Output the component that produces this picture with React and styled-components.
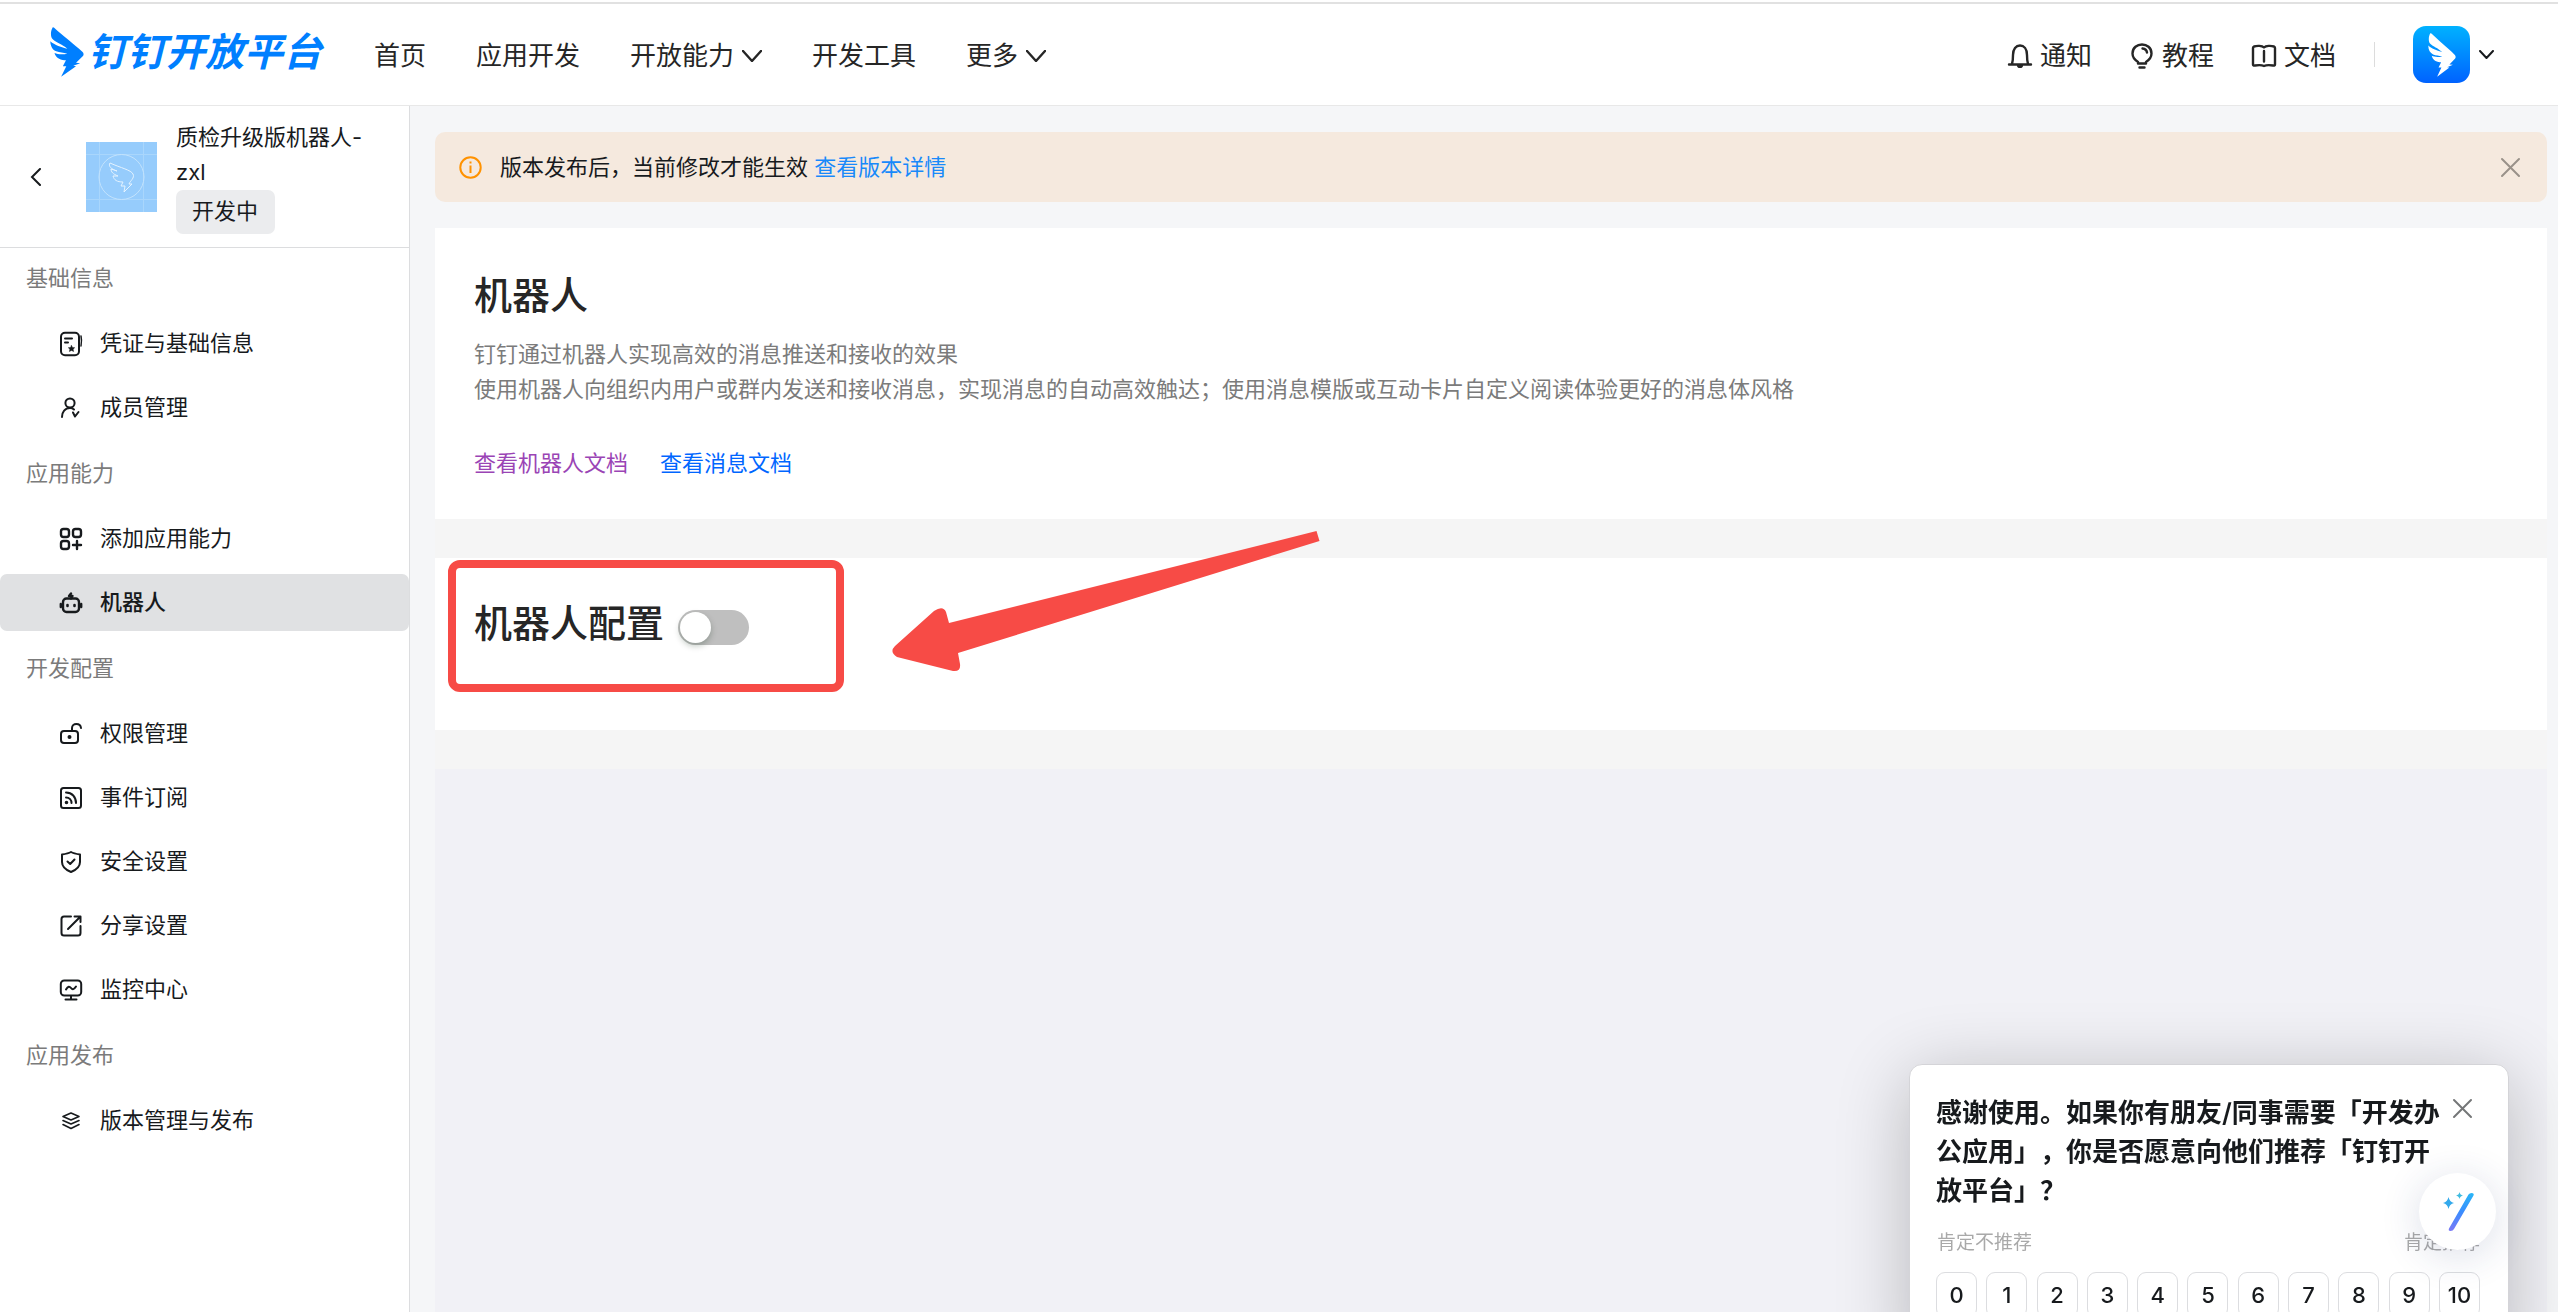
import React, { useState } from 'react'
import styled, { createGlobalStyle } from 'styled-components'

const GlobalStyle = createGlobalStyle`
* {
    box-sizing: border-box;
}
body {
    margin: 0;
    background: #f5f6f8;
    color: #171a1d;
    font-family: Inter, 'Noto Sans CJK SC', sans-serif;
    font-size: 22px;
    line-height: 35px;
    text-spacing-trim: space-all;
}
a {
    text-decoration: none;
}
button {
    font: inherit;
    color: inherit;
    background: none;
    border: 0;
    padding: 0;
    cursor: pointer;
}
svg {
    display: block;
    flex: none;
}
h1, h2, h3, p {
    margin: 0;
}
`

const Page = styled.div`
min-height: 100vh;
display: flex;
flex-direction: column;
`

const TopLine = styled.div`
height: 4px;
background: #fff;
border-bottom: 2px solid #e1e1e1;
`

const Header = styled.header`
display: flex;
align-items: center;
height: 102px;
padding: 0 64px 0 50px;
background: #fff;
border-bottom: 1px solid #e8e8e8;
`

const Logo = styled.a`
display: flex;
align-items: center;
gap: 4px;
margin-bottom: 6px;
color: #007fff;
font-size: 39px;
line-height: 50px;
font-weight: 700;
font-style: italic;
`

const Nav = styled.nav`
display: flex;
flex: 1;
gap: 50px;
margin-left: 52px;
`

const NavLink = styled.a`
display: flex;
align-items: center;
gap: 8px;
padding-top: 2px;
color: #262626;
font-size: 26px;
line-height: 38px;
white-space: nowrap;
`

const Tools = styled.div`
display: flex;
align-items: center;
gap: 38px;
`

const Divider = styled.span`
width: 1px;
height: 25px;
background: #dcdcdc;
`

const AvatarButton = styled.button`
display: flex;
align-items: center;
gap: 9px;
`

const Avatar = styled.span`
display: flex;
align-items: center;
justify-content: center;
width: 57px;
height: 57px;
border-radius: 13px;
background: linear-gradient(#00b2ff, #0062ff);
color: #fff;
`

const Body = styled.div`
display: flex;
flex: 1;
`

const Sidebar = styled.aside`
flex: none;
width: 410px;
background: #fff;
border-right: 1px solid #dcdddf;
`

const AppInfo = styled.div`
display: flex;
align-items: center;
height: 142px;
padding: 0 30px;
border-bottom: 1px solid #dcdddf;
`

const AppIcon = styled.div`
margin: 0 19px 0 44px;
`

const AppName = styled.div`
flex: 1;
`

const Tag = styled.span`
display: block;
width: fit-content;
padding: 4px 17px 5px 16px;
border-radius: 7px;
background: #ebecee;
`

const GroupTitle = styled.h3`
height: 67px;
padding: 13px 26px;
color: #7b7b7b;
font-size: 22px;
font-weight: 400;
`

const MenuItem = styled.a`
display: flex;
align-items: center;
gap: 18px;
height: 57px;
margin-bottom: 7px;
padding-left: 60px;
border-radius: 7px;
color: #171a1d;
background: ${(p) => (p.$active ? '#e0e1e3' : 'transparent')};
font-weight: ${(p) => (p.$active ? 500 : 400)};
`

const Main = styled.main`
display: flex;
flex-direction: column;
flex: 1;
min-width: 0;
padding: 26px 11px 0 25px;
`

const Alert = styled.div`
display: flex;
align-items: center;
gap: 18px;
height: 70px;
margin-bottom: 26px;
padding: 0 27px 0 24px;
border-radius: 10px;
background: #f5e9de;
`

const AlertText = styled.p`
flex: 1;

a {
    color: #1989fa;
}
`

const CloseButton = styled.button`
color: ${(p) => p.$color};
`

const Content = styled.div`
display: flex;
flex-direction: column;
flex: 1;
gap: 39px;
background: #f5f5f5;
`

const Card = styled.section`
position: relative;
background: #fff;
`

const IntroCard = styled(Card)`
height: 291px;
padding: 43px 39px;
`

const ConfigCard = styled(Card)`
display: flex;
align-items: flex-start;
gap: 14px;
height: 172px;
padding: 41px 39px;
`

const Title = styled.h2`
color: #262626;
font-size: 38px;
line-height: 48px;
font-weight: 500;
`

const Desc = styled.p`
margin: 18px 0 39px;
color: #7b7b7b;
`

const DocLinks = styled.div`
display: flex;
gap: 32px;
`

const DocLink = styled.a`
color: ${(p) => (p.$visited ? '#9a44b5' : '#0066ff')};
`

const Switch = styled.input`
appearance: none;
width: 71px;
height: 35px;
margin: 11px 0 0;
padding: 2px;
border-radius: 18px;
background: ${(p) => (p.checked ? '#0066ff' : '#bfbfbf')};
cursor: pointer;

&::before {
    content: '';
    display: block;
    width: 31px;
    height: 31px;
    margin-left: ${(p) => (p.checked ? '36px' : '0')};
    border-radius: 50%;
    background: #fff;
    box-shadow: 0 3px 6px rgba(0, 35, 11, 0.25);
}
`

const Highlight = styled.div`
position: absolute;
top: 2px;
left: 13px;
width: 396px;
height: 132px;
border: 8px solid #f74b46;
border-radius: 12px;
pointer-events: none;
`

const Arrow = styled.svg`
position: absolute;
top: -28px;
left: 456px;
pointer-events: none;
`

const Blank = styled.div`
flex: 1;
background: #f1f1f6;
`

const Survey = styled.section`
position: fixed;
right: 49px;
bottom: -52px;
width: 600px;
height: 300px;
padding: 28px 28px 28px 26px;
border: 1px solid #d4d4d8;
border-radius: 13px;
background: #fff;
box-shadow: 0 12px 72px rgba(0, 0, 0, 0.24);
`

const SurveyHead = styled.div`
display: flex;
align-items: flex-start;
justify-content: space-between;
padding-right: 8px;

button {
    padding-top: 6px;
}
`

const SurveyTitle = styled.h2`
width: 510px;
font-size: 26px;
line-height: 39px;
font-weight: 600;
`

const Legend = styled.div`
display: flex;
justify-content: space-between;
margin: 18px 0 14px;
padding-left: 1px;
color: #a9a9a9;
font-size: 19px;
line-height: 30px;
`

const Scores = styled.div`
display: flex;
justify-content: space-between;
`

const Score = styled.button`
width: 41px;
height: 46px;
border: 1px solid #dcdde0;
border-radius: 9px;
font-weight: 500;
`

const Assistant = styled.button`
position: fixed;
right: 62px;
bottom: 62px;
display: flex;
align-items: center;
justify-content: center;
width: 77px;
height: 77px;
border-radius: 50%;
background: #fff;
box-shadow: 0 6px 40px rgba(30, 50, 110, 0.16);
`

const WING = 'M40 44C34 54 32 72 40 80C50 90 66 94 82 109C66 104 45 98 33 86C33 102 40 112 50 117C60 121 70 121 82 124C68 127 54 126 45 122C48 134 58 143 74 144L78 144L69 162L79 162L64 194L107 162L99 161L119 153L107 152L127 131Q131 125 126 119C100 93 65 66 44 45Q41 43 40 44Z'

function Wing({ width, height }) {
    return (
        <svg width={width} height={height} viewBox="32 43 98 152" preserveAspectRatio="none" fill="currentColor">
            <path d={WING} />
        </svg>
    )
}

function Icon({ size = 22, children, width = 2 }) {
    return (
        <svg width={size} height={size} viewBox={`0 0 ${size} ${size}`} fill="none" stroke="currentColor" strokeWidth={width} strokeLinecap="round" strokeLinejoin="round" overflow="visible">
            {children}
        </svg>
    )
}

function Chevron({ w, h, width }) {
    return (
        <svg width={w} height={h} viewBox={`0 0 ${w} ${h}`} fill="none" stroke="currentColor" strokeWidth={width} strokeLinecap="round" strokeLinejoin="round">
            <path d={`M1 1L${w / 2} ${h - 1}L${w - 1} 1`} />
        </svg>
    )
}

function Cross() {
    return (
        <Icon size={19}><path d="M1 1L18 18M18 1L1 18" /></Icon>
    )
}

const icons = {
    credential: <Icon><rect x="1" y="-0.2" width="18" height="22.4" rx="4" /><path d="M5 5.500H12M5 9.500H8" /><path d="M11.500 12.500l1 2 2.200.2-1.600 1.500.5 2.300-2.100-1.100-2.100 1.100.5-2.300-1.600-1.500 2.200-.2z" fill="currentColor" strokeWidth="0.500" /><path d="M21 3Q22 7 21 13" strokeWidth="1.500" /></Icon>,
    member: <Icon><circle cx="10" cy="6" r="4.600" /><path d="M2 20C2 15 5 11 10 11C12 11 13 11.500 14 12.500" /><path d="M13 15.500L15 19.500L18.500 15" /></Icon>,
    add: <Icon width={2.4}><rect x="1" y="1" width="8" height="8" rx="2.500" /><rect x="13" y="1" width="8" height="8" rx="2.500" /><rect x="1" y="13" width="8" height="8" rx="2.500" /><path d="M17 13V21M13 17H21" /></Icon>,
    robot: <Icon width={2.4}><rect x="3" y="6.500" width="16" height="13.500" rx="3.500" /><path d="M0.800 12V15M21.200 12V15M11 1.500L9 4H12.500L11 6.500" /><path d="M7.500 13V14M14.500 13V14" strokeWidth="2.600" /></Icon>,
    lock: <Icon><rect x="1" y="8" width="17" height="12" rx="3" /><path d="M12 8V5C12 -0.500 20.500 -0.500 21 5" /><circle cx="9.500" cy="14" r="1" fill="currentColor" /></Icon>,
    event: <Icon><rect x="1" y="1" width="20" height="20" rx="2.500" /><path d="M6 5.500C12 5.500 16 10 16 16M6 10.500C9.500 10.500 11.500 13 11.500 16" /><circle cx="6.500" cy="15.500" r="0.800" fill="currentColor" /></Icon>,
    shield: <Icon><path d="M11 1C13.500 2.500 16.500 3 20 3.500V11C20 16 16 19 11 21C6 19 2 16 2 11V3.500C5.500 3 8.500 2.500 11 1Z" /><path d="M7.500 10.500L10.200 13L14.500 8.500" /></Icon>,
    share: <Icon><path d="M11 1.500H4Q1.500 1.500 1.500 4V18Q1.500 20.500 4 20.500H18Q20.500 20.500 20.500 18V11M8 14L20 2M14.500 1.500H20.500V7" /></Icon>,
    monitor: <Icon><rect x="0.800" y="1.500" width="20.400" height="15" rx="3.500" /><path d="M6 10.500C8 7 9.500 7 11 9C12.500 11 14 10.500 16 7.500M11 17V20M5.500 20.500H16.500" /></Icon>,
    layers: <Icon width={1.6}><path d="M11 3L19 6.500L11 10L3 6.500ZM3 10.500L11 14L19 10.500M3 14.500L11 18.500L19 14.500" /></Icon>,
    bell: <Icon size={24} width={2.4}><path d="M4 20C5 17 5 14 5 11C5 5 8 1.500 12 1.500C16 1.500 19 5 19 11C19 14 19 17 20 20M1 20.500H23M10 21C10 23.500 14 23.500 14 21" /></Icon>,
    bulb: <Icon size={24} width={2.4}><path d="M8 19.500V18C5 16 2.500 13.500 2.500 9.500C2.500 -2.500 21.500 -2.500 21.500 9.500C21.500 13.500 19 16 16 18V19.500Z" /><path d="M12.500 4.500Q16.500 5 17 8.500M9.500 23.500H14.500" /></Icon>,
    book: <Icon size={24} width={2.4}><path d="M12 3.500C10 1.500 5 1.500 2 2.500Q1 3 1 4V20.500Q1 22 3 21.500C6 21 10 21 12 22C14 21 18 21 21 21.500Q23 22 23 20.500V4Q23 3 22 2.500C19 1.500 14 1.500 12 3.500ZM12 7V17.500" /></Icon>,
}

const navItems = [
    { text: '首页' },
    { text: '应用开发' },
    { text: '开放能力', more: true },
    { text: '开发工具' },
    { text: '更多', more: true },
]

const tools = [
    { text: '通知', icon: 'bell' },
    { text: '教程', icon: 'bulb' },
    { text: '文档', icon: 'book' },
]

const menu = [
    { title: '基础信息', items: [['credential', '凭证与基础信息'], ['member', '成员管理']] },
    { title: '应用能力', items: [['add', '添加应用能力'], ['robot', '机器人']] },
    {
        title: '开发配置',
        items: [['lock', '权限管理'], ['event', '事件订阅'], ['shield', '安全设置'], ['share', '分享设置'], ['monitor', '监控中心']],
    },
    { title: '应用发布', items: [['layers', '版本管理与发布']] },
]

export default function App() {
    const [enabled, setEnabled] = useState(false)

    return (
        <Page>
            <GlobalStyle />
            <TopLine />
            <Header>
                <Logo href="#"><Wing width={34} height={50} />钉钉开放平台</Logo>
                <Nav>
                    {navItems.map((item) => (
                        <NavLink href="#" key={item.text}>
                            {item.text}
                            {item.more && <Chevron w={20} h={12} width={2.4} />}
                        </NavLink>
                    ))}
                </Nav>
                <Tools>
                    {tools.map((item) => (
                        <NavLink href="#" key={item.text}>{icons[item.icon]}{item.text}</NavLink>
                    ))}
                    <Divider />
                    <AvatarButton aria-label="账号">
                        <Avatar><Wing width={28} height={44} /></Avatar>
                        <Chevron w={15} h={9} width={2} />
                    </AvatarButton>
                </Tools>
            </Header>
            <Body>
                <Sidebar>
                    <AppInfo>
                        <button aria-label="返回">
                            <svg width="12" height="18" viewBox="0 0 12 18" fill="none" stroke="currentColor" strokeWidth="2" strokeLinecap="round">
                                <path d="M10 1L2 9L10 17" />
                            </svg>
                        </button>
                        <AppIcon>
                            <svg width="71" height="70" viewBox="0 0 71 70" fill="none" stroke="#c3e3fd">
                                <path d="M0 0H71V70H0Z" fill="#96ccfc" stroke="none" />
                                <path d="M13.500 0V70M57.500 0V70M0 12.500H71M0 57.500H71" stroke="#a9d6fc" />
                                <circle cx="35.500" cy="35" r="22.500" />
                                <path d="M24 21C35 26 45 28 47 32C49 36 44 39 43 42H46L38 50L39 44L35 44L37 40C31 40 28 38 27 34L32 34C27 32 25 30 25 27L31 29C25 27 22 24 24 21Z" stroke="#e4f3ff" />
                            </svg>
                        </AppIcon>
                        <AppName>
                            质检升级版机器人-zxl
                            <Tag>开发中</Tag>
                        </AppName>
                    </AppInfo>
                    {menu.map((group) => (
                        <div key={group.title}>
                            <GroupTitle>{group.title}</GroupTitle>
                            {group.items.map(([icon, text]) => (
                                <MenuItem href="#" key={text} $active={text === '机器人'}>{icons[icon]}{text}</MenuItem>
                            ))}
                        </div>
                    ))}
                </Sidebar>
                <Main>
                    <Alert>
                        <svg width="23" height="23" viewBox="0 0 23 23" fill="none" stroke="#ff9200" strokeWidth="2">
                            <circle cx="11.500" cy="11.500" r="10.200" />
                            <path d="M11.500 9.500V17M11.500 5.500V7.500" />
                        </svg>
                        <AlertText>版本发布后，当前修改才能生效 <a href="#">查看版本详情</a></AlertText>
                        <CloseButton aria-label="关闭" $color="#999189"><Cross /></CloseButton>
                    </Alert>
                    <Content>
                        <IntroCard>
                            <Title>机器人</Title>
                            <Desc>
                                钉钉通过机器人实现高效的消息推送和接收的效果<br />
                                使用机器人向组织内用户或群内发送和接收消息，实现消息的自动高效触达；使用消息模版或互动卡片自定义阅读体验更好的消息体风格
                            </Desc>
                            <DocLinks>
                                <DocLink href="#" $visited>查看机器人文档</DocLink>
                                <DocLink href="#">查看消息文档</DocLink>
                            </DocLinks>
                        </IntroCard>
                        <ConfigCard>
                            <Title as="label" htmlFor="robot">机器人配置</Title>
                            <Switch id="robot" type="checkbox" checked={enabled} onChange={(e) => setEnabled(e.target.checked)} />
                            <Highlight />
                            <Arrow width="431" height="144" viewBox="0 0 431 144" fill="#f74b46">
                                <path d="M425.500 1L428.500 11L67 123L69 134Q70 142 62 141L6 127Q-2 122 4 116L43 81Q52 75 55 82L58 93Z" />
                            </Arrow>
                        </ConfigCard>
                        <Blank />
                    </Content>
                </Main>
            </Body>
            <Survey>
                <SurveyHead>
                    <SurveyTitle>感谢使用。如果你有朋友/同事需要「开发办公应用」，你是否愿意向他们推荐「钉钉开放平台」？</SurveyTitle>
                    <CloseButton aria-label="关闭" $color="#747677"><Cross /></CloseButton>
                </SurveyHead>
                <Legend><span>肯定不推荐</span><span>肯定推荐</span></Legend>
                <Scores>
                    {[0, 1, 2, 3, 4, 5, 6, 7, 8, 9, 10].map((n) => (
                        <Score key={n}>{n}</Score>
                    ))}
                </Scores>
            </Survey>
            <Assistant aria-label="助手">
                <svg width="36" height="40" viewBox="0 0 36 40">
                    <defs>
                        <linearGradient id="wand" x1="0" y1="0" x2="0" y2="1">
                            <stop offset="0" stopColor="#29b6f6" />
                            <stop offset="0.500" stopColor="#3a8dff" />
                            <stop offset="1" stopColor="#7a78f5" />
                        </linearGradient>
                    </defs>
                    <path d="M28.500 2.500Q29.500 1 31.500 1Q34.500 1 33.500 3.500L14 37Q13 39 10.500 39Q8 39 9 36.500Z" fill="url(#wand)" />
                    <path d="M8.500 5Q9.500 10 14 11Q9.500 12 8.500 17Q7.500 12 3 11Q7.500 10 8.500 5Z" fill="#33a9ec" />
                    <path d="M19.500 0Q20 3 23 3.500Q20 4 19.500 7Q19 4 16 3.500Q19 3 19.500 0Z" fill="#3fbbe0" />
                </svg>
            </Assistant>
        </Page>
    )
}
